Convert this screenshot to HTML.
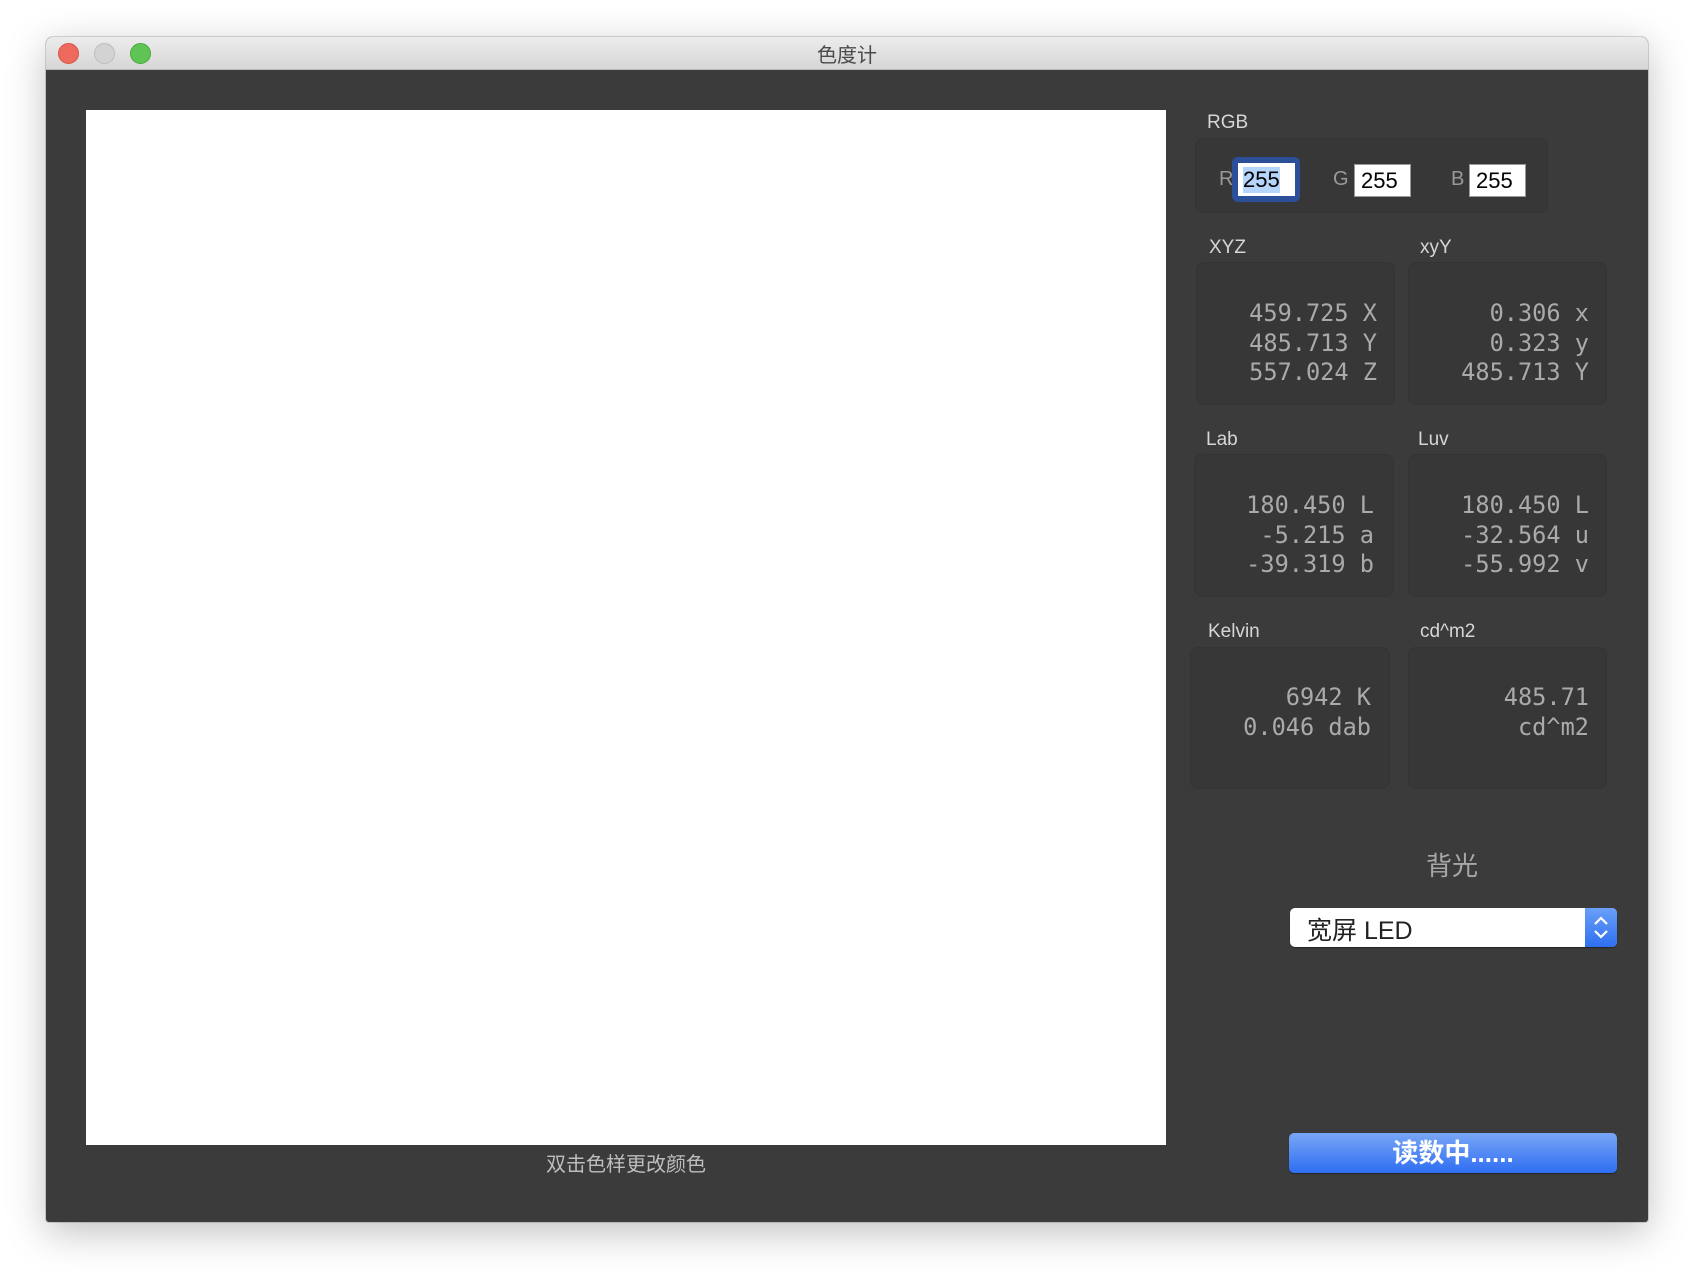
<!DOCTYPE html>
<html><head><meta charset="utf-8"><style>
body{margin:0;width:1694px;height:1276px;background:#fff;position:relative;overflow:hidden;font-family:"Liberation Sans","Noto Sans CJK SC",sans-serif}
.win{position:absolute;left:46px;top:37px;width:1602px;height:1185px;background:#3b3b3b;border-radius:7px 7px 3px 3px;box-shadow:0 10px 40px rgba(0,0,0,.25),0 0 0 1px rgba(0,0,0,.15);overflow:hidden}
.tb{position:absolute;left:0;top:0;right:0;height:32px;background:linear-gradient(#ececec,#d6d6d6);border-bottom:1px solid #b9b9b9}
.l{position:absolute;top:6px;width:21px;height:21px;border-radius:50%;box-sizing:border-box}
.title{position:absolute;left:0;right:0;top:2px;text-align:center;font-size:20px;color:#4a4a4a}
.a{position:absolute}
.sample{left:40px;top:73px;width:1080px;height:1035px;background:#fff}
.lab{position:absolute;color:#d6d6d6;font-size:19px}
.box{position:absolute;background:#373737;border:1px solid #343434;border-radius:8px;box-sizing:border-box}
.num{position:absolute;font-family:"DejaVu Sans Mono","Liberation Mono",monospace;font-size:23.6px;line-height:29.5px;color:#aaa;text-align:right;white-space:pre}
.fld{position:absolute;background:#fff;border:1px solid #999;box-sizing:border-box;font-size:22px;color:#000;padding-left:6px;line-height:32px}
.rl{position:absolute;color:#999;font-size:20px}
</style></head><body>
<div class="win">
<div class="tb">
<div class="l" style="left:12px;background:#ee6a5e;border:1px solid #d65446"></div>
<div class="l" style="left:48px;background:#d3d3d3;border:1px solid #bdbdbd"></div>
<div class="l" style="left:84px;background:#5fc454;border:1px solid #4aa83f"></div>
<div class="title">色度计</div>
</div>
<div class="a sample"></div>
<div class="a" style="left:40px;width:1080px;top:1111px;text-align:center;color:#bdbdbd;font-size:20px">双击色样更改颜色</div>

<div class="lab" style="left:1161px;top:75px">RGB</div>
<div class="box" style="left:1149px;top:101px;width:353px;height:75px"></div>
<div class="rl" style="left:1173px;top:131px">R</div>
<div class="a" style="left:1186px;top:120px;width:68px;height:45px;background:#2b4f98;border-radius:6px"></div>
<div class="fld" style="left:1192px;top:126px;width:57px;height:33px;border:none;padding-left:5px;line-height:34px"><span style="background:#b5d5fb;line-height:26px;display:inline-block">255</span></div>
<div class="rl" style="left:1287px;top:131px">G</div>
<div class="fld" style="left:1308px;top:127px;width:57px;height:33px">255</div>
<div class="rl" style="left:1405px;top:131px">B</div>
<div class="fld" style="left:1423px;top:127px;width:57px;height:33px">255</div>

<div class="lab" style="left:1163px;top:200px">XYZ</div>
<div class="lab" style="left:1374px;top:200px">xyY</div>
<div class="box" style="left:1150px;top:225px;width:199px;height:143px"></div>
<div class="box" style="left:1362px;top:225px;width:199px;height:143px"></div>
<div class="num" style="right:271px;top:262px">459.725 X
485.713 Y
557.024 Z</div>
<div class="num" style="right:59px;top:262px">0.306 x
0.323 y
485.713 Y</div>

<div class="lab" style="left:1160px;top:392px">Lab</div>
<div class="lab" style="left:1372px;top:392px">Luv</div>
<div class="box" style="left:1148px;top:417px;width:200px;height:143px"></div>
<div class="box" style="left:1362px;top:417px;width:199px;height:143px"></div>
<div class="num" style="right:274px;top:454px">180.450 L
-5.215 a
-39.319 b</div>
<div class="num" style="right:59px;top:454px">180.450 L
-32.564 u
-55.992 v</div>

<div class="lab" style="left:1162px;top:584px">Kelvin</div>
<div class="lab" style="left:1374px;top:584px">cd^m2</div>
<div class="box" style="left:1144px;top:610px;width:200px;height:142px"></div>
<div class="box" style="left:1362px;top:610px;width:199px;height:142px"></div>
<div class="num" style="right:277px;top:646px">6942 K
0.046 dab</div>
<div class="num" style="right:59px;top:646px">485.71
cd^m2</div>

<div class="a" style="left:1356px;width:100px;top:809px;text-align:center;color:#a8a8a8;font-size:26px">背光</div>
<div class="a" style="left:1244px;top:871px;width:327px;height:39px;background:#fff;border-radius:5px;box-shadow:0 1px 1px rgba(0,0,0,.4)">
<div class="a" style="left:17px;top:3px;font-size:25px;color:#222">宽屏 LED</div>
<div class="a" style="right:0;top:0;width:32px;height:39px;background:linear-gradient(#6aa0f8,#2f6ff0);border-radius:0 5px 5px 0">
<svg width="32" height="39" viewBox="0 0 32 39"><path d="M10 16 L16 10 L22 16 M10 23 L16 29 L22 23" fill="none" stroke="#fff" stroke-width="2.2"/></svg></div>
</div>
<div class="a" style="left:1243px;top:1096px;width:328px;height:40px;background:linear-gradient(#78a6f6,#2f6ef2);border-radius:5px;box-shadow:0 1px 1px rgba(0,0,0,.4);color:#fff;font-size:26px;font-weight:bold;text-align:center;line-height:40px">读数中......</div>
</div>
</body></html>
